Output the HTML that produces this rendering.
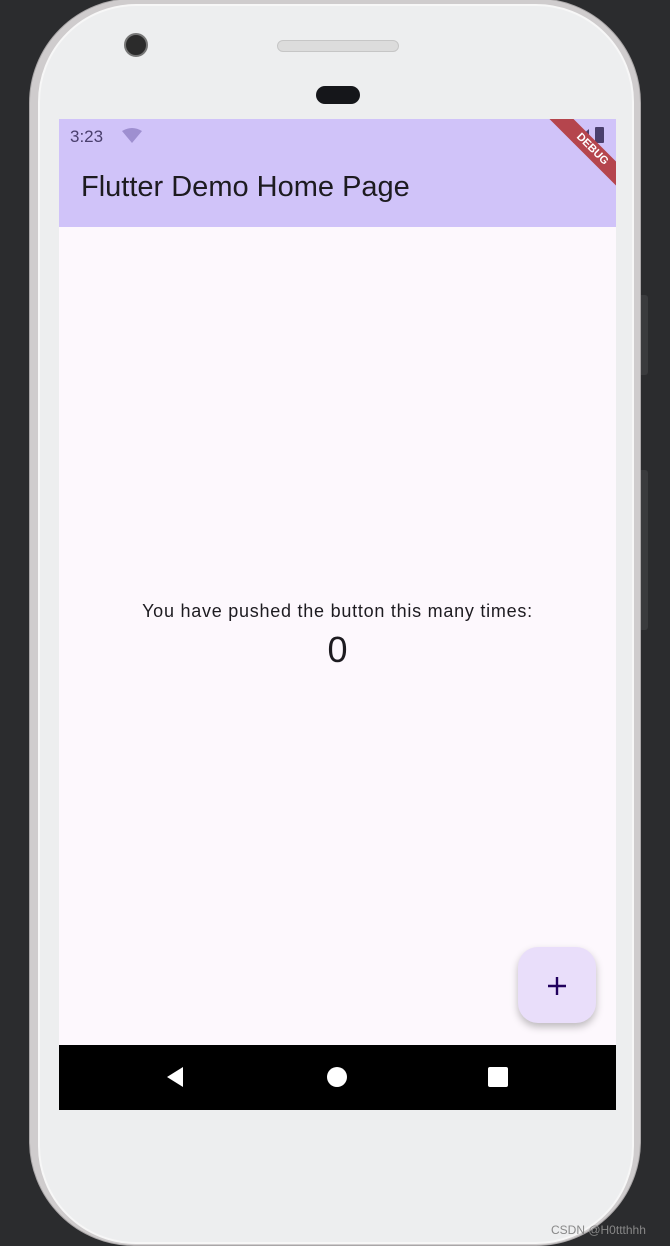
<!DOCTYPE html>
<html><head><style>
body{margin:0;width:670px;height:1246px;background:#2b2c2e;position:relative;overflow:hidden;font-family:"Liberation Sans",sans-serif}
.phone{position:absolute;left:29px;top:-2px;width:612px;height:1248px;border-radius:105px;background:#cfcccd;border:1px solid #a9a6a7;box-sizing:border-box}
.inner{position:absolute;left:38px;top:4px;width:596px;height:1240px;border-radius:98px;background:#edeeef;border:2px solid #f7f7f7;box-sizing:border-box}
.btn{position:absolute;left:640px;width:8px;background:#3a3b3d;border-radius:0 3px 3px 0}
.screen{position:absolute;left:59px;top:119px;width:557px;height:991px;background:#fdf8fd;overflow:hidden}
.appbar{position:absolute;left:0;top:0;width:557px;height:108px;background:#d0c3f9}
.nav{position:absolute;left:0;top:926px;width:557px;height:65px;background:#000}
</style></head><body>
<div class="btn" style="top:295px;height:80px"></div>
<div class="btn" style="top:470px;height:160px"></div>
<div class="phone"></div>
<div class="inner"></div>
<div style="position:absolute;left:124px;top:33px;width:24px;height:24px;border-radius:50%;background:#2b2b2b;border:2px solid #777;box-sizing:border-box"></div>
<div style="position:absolute;left:277px;top:40px;width:122px;height:12px;border-radius:6px;background:#dcdcdc;border:1px solid #c6c6c6;box-sizing:border-box"></div>
<div style="position:absolute;left:316px;top:86px;width:44px;height:18px;border-radius:9px;background:#15161a"></div>
<div class="screen">
 <div class="appbar">
  <div style="position:absolute;left:11px;top:8px;font-size:17px;color:#4a3f6d">3:23</div>
  <svg style="position:absolute;left:62px;top:9px" width="22" height="16"><path d="M1 3 Q11 -3 21 3 L11 15Z" fill="#9e8fd0"/></svg>
  <svg style="position:absolute;left:513px;top:9px" width="18" height="16"><path d="M1 15 L17 1 L17 15Z" fill="#4a3f6d"/></svg>
  <div style="position:absolute;left:536px;top:8px;width:9px;height:16px;background:#4a3f6d;border-radius:1px"></div>
  <div style="position:absolute;left:22px;top:52px;font-size:29px;color:#1d1b20">Flutter Demo Home Page</div>
  <div style="position:absolute;left:478px;top:22px;width:110px;height:17px;background:#b5454d;transform:rotate(45deg);color:#fff;font-size:11px;font-weight:bold;text-align:center;line-height:17px">DEBUG</div>
 </div>
 <div style="position:absolute;left:0;width:557px;top:482px;text-align:center;font-size:18px;letter-spacing:0.75px;color:#1d1b20">You have pushed the button this many times:</div>
 <div style="position:absolute;left:0;width:557px;top:510px;text-align:center;font-size:36px;color:#1d1b20">0</div>
 <div style="position:absolute;left:459px;top:828px;width:78px;height:76px;border-radius:20px;background:#e9defa;box-shadow:0 4px 8px rgba(0,0,0,0.25)">
  <svg style="position:absolute;left:28px;top:28px" width="22" height="22"><path d="M11 2 V20 M2 11 H20" stroke="#21005d" stroke-width="2.4"/></svg>
 </div>
 <div class="nav">
  <svg style="position:absolute;left:105px;top:21px" width="22" height="22"><path d="M3 11 L19 1 L19 21Z" fill="#fff"/></svg>
  <div style="position:absolute;left:268px;top:22px;width:20px;height:20px;border-radius:50%;background:#fff"></div>
  <div style="position:absolute;left:429px;top:22px;width:20px;height:20px;border-radius:2px;background:#fff"></div>
 </div>
</div>
<div style="position:absolute;left:551px;top:1223px;font-size:12px;color:#888">CSDN @H0ttthhh</div>
</body></html>
